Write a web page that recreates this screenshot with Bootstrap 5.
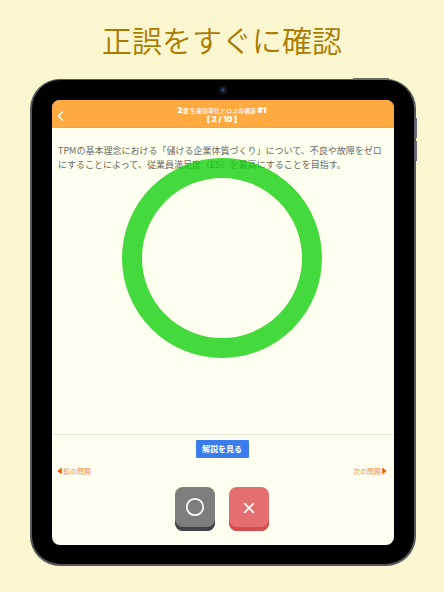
<!DOCTYPE html>
<html lang="ja">
<head>
<meta charset="utf-8">
<meta name="viewport" content="width=device-width, initial-scale=1">
<title>正誤をすぐに確認</title>
<link href="https://cdn.jsdelivr.net/npm/bootstrap@5.3.0/dist/css/bootstrap.min.css" rel="stylesheet">
<style>
body { background: #faf6cf; font-family: "Noto Sans CJK JP", sans-serif; color: #6a6a64; }
.headline { color: #a97c00; font-size: 30px; line-height: 40px; font-weight: 350; padding: 19px 0 20px; }
.tablet { margin: 0 28px 26px 30px; padding: 20px 20px 19px; background: #000; border: 2px solid #56565f; border-top-width: 1px; border-radius: 30px; }
.camera { top: 6px; left: calc(50% - 4px); width: 8px; height: 8px; border-radius: 50%; background: radial-gradient(#26488c 0 1px, #15171f 2px); }
.side-key { width: 2px; height: 20px; right: -3px; background: #6b6b78; }
.key-up { top: 38px; }
.key-down { top: 61px; }
.key-power { top: -2px; right: 25px; width: 36px; height: 2px; background: #6b6b60; }
.app { background: #ffffef; border-radius: 8px; }
.app-bar { background: #ffaa40; color: #fff; height: 28px; padding: 3px 5px 0 3px; border-bottom: 1px solid #fba52f; font-size: 6px; line-height: 9px; font-weight: 500; }
.app-bar b { font-family: Inter, sans-serif; font-size: 8px; font-weight: 900; }
.back { left: 4px; top: 9px; line-height: 0; }
.question { font-size: 9px; line-height: 14px; padding: 16px 6px 0; }
.ring { top: 30px; left: calc(50% - 101px); width: 200px; height: 200px; border: 20px solid #10cf0a; border-radius: 50%; opacity: .78; }
.panel { border-top: 1px solid #e8e8dc; padding: 5px 7px 14px 5px; }
.explain { background: #3b7ded; color: #fff; font-size: 8px; line-height: 18px; font-weight: 700; width: 53px; border-radius: 1px; }
.explain:hover { background: #2f6dd8; color: #fff; }
.pager { font-size: 7px; line-height: 12px; margin: 7px 0 10px; }
.pager a { color: #ef8a57; gap: 1px; }
.answer { width: 40px; height: 44px; border: 0; border-radius: 8px; padding: 0 0 4px; }
.answer-yes { background: #7d7d7d; box-shadow: inset 0 -4px #434347; }
.answer-no { background: #e46e70; box-shadow: inset 0 -4px #d44c50; }
.answers { gap: 14px; }
</style>
<script src="https://cdn.jsdelivr.net/npm/bootstrap@5.3.0/dist/js/bootstrap.bundle.min.js"></script>
</head>
<body class="d-flex flex-column min-vh-100">
<h1 class="headline text-center m-0">正誤をすぐに確認</h1>
<main class="tablet position-relative flex-grow-1 d-flex flex-column">
  <span class="camera position-absolute"></span>
  <span class="side-key key-up position-absolute"></span>
  <span class="side-key key-down position-absolute"></span>
  <span class="key-power position-absolute"></span>
  <div class="app flex-grow-1 d-flex flex-column overflow-hidden">
    <header class="app-bar position-relative d-flex flex-column justify-content-center text-center">
      <a href="#" class="back position-absolute" aria-label="戻る"><svg width="8" height="14" viewBox="0 0 8 14" fill="none" stroke="#fff" stroke-width="1.4"><path d="M6.8 2.5 2.5 7l4.3 4.5"/></svg></a>
      <div><b>2</b>章 生産効率化とロスの構造 <b>#1</b></div>
      <div><b>[ 2 / 10 ]</b></div>
    </header>
    <section class="position-relative flex-grow-1">
      <p class="question m-0">TPMの基本理念における「儲ける企業体質づくり」について、不良や故障をゼロにすることによって、従業員満足度（ES）を最高にすることを目指す。</p>
      <div class="ring position-absolute"></div>
    </section>
    <footer class="panel">
      <div class="text-center d-flex justify-content-center"><button type="button" class="btn explain p-0 border-0">解説を見る</button></div>
      <nav class="pager d-flex justify-content-between">
        <a href="#" class="d-flex align-items-center text-decoration-none"><svg width="5" height="8" viewBox="0 0 5 8"><path d="M4.8.5v7L.3 4z" fill="#f05a00"/></svg>前の問題</a>
        <a href="#" class="d-flex align-items-center text-decoration-none">次の問題<svg width="5" height="8" viewBox="0 0 5 8"><path d="M.2.5v7L4.7 4z" fill="#f05a00"/></svg></a>
      </nav>
      <div class="answers d-flex justify-content-center">
        <button type="button" class="answer answer-yes" aria-label="正しい"><svg class="d-block mx-auto" width="20" height="20" viewBox="0 0 20 20" fill="none" stroke="#fff" stroke-width="1.7"><circle cx="10" cy="10" r="8.2"/></svg></button>
        <button type="button" class="answer answer-no" aria-label="誤り"><svg class="d-block mx-auto" width="20" height="20" viewBox="0 0 20 20" fill="none" stroke="#fff" stroke-width="1.7"><path d="m5.2 6.2 9.6 9.6m0-9.6-9.6 9.6"/></svg></button>
      </div>
    </footer>
  </div>
</main>
</body>
</html>
